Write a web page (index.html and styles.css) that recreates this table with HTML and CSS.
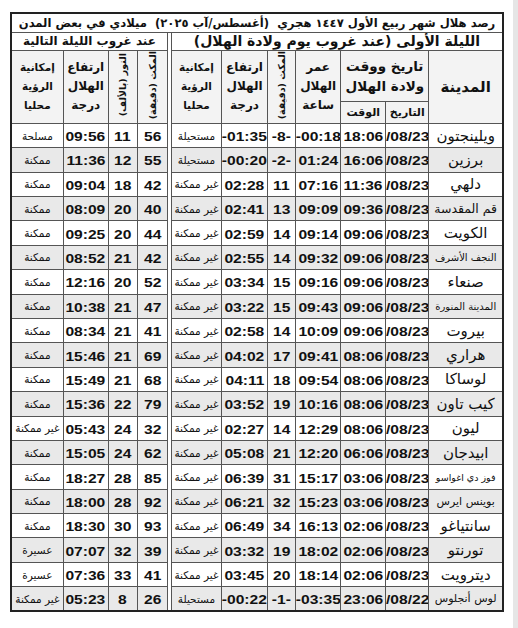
FILE: index.html
```html
<!DOCTYPE html>
<html lang="ar">
<head>
<meta charset="utf-8">
<title>رصد هلال شهر ربيع الأول</title>
<link rel="stylesheet" href="styles.css">
</head>
<body>
<table class="moon" dir="rtl">
  <colgroup>
    <col class="c-city"><col class="c-date"><col class="c-time"><col class="c-age"><col class="c-mk"><col class="c-alt"><col class="c-vis">
    <col class="c-gap">
    <col class="c-mk2"><col class="c-lt"><col class="c-alt2"><col class="c-vis2">
  </colgroup>
  <thead>
    <tr class="r-title">
      <th colspan="12" class="title">رصد هلال شهر ربيع الأول ١٤٤٧ هجري&nbsp; (أغسطس/آب ٢٠٢٥)&nbsp; ميلادي في بعض المدن</th>
    </tr>
    <tr class="r-sub">
      <th colspan="7" class="sub">الليلة الأولى (عند غروب يوم ولادة الهلال)</th>
      <th class="gap gap-top"></th>
      <th colspan="4" class="sub sub-left">عند غروب الليلة التالية</th>
    </tr>
    <tr class="r-ha">
      <th rowspan="2" class="h h-city">المدينة</th>
      <th colspan="2" class="h h-birth">تاريخ ووقت<br>ولادة الهلال</th>
      <th rowspan="2" class="h h-age">عمر<br>الهلال<br>ساعة</th>
      <th rowspan="2" class="h"><span class="vert">المكث (دقيقة)</span></th>
      <th rowspan="2" class="h h-alt">ارتفاع<br>الهلال<br>درجة</th>
      <th rowspan="2" class="h h-vis">إمكانية<br>الرؤية<br>محليا</th>
      <th rowspan="2" class="gap"></th>
      <th rowspan="2" class="h"><span class="vert">المكث (دقيقة)</span></th>
      <th rowspan="2" class="h"><span class="vert">النور (بالألف)</span></th>
      <th rowspan="2" class="h h-alt">ارتفاع<br>الهلال<br>درجة</th>
      <th rowspan="2" class="h h-vis">إمكانية<br>الرؤية<br>محليا</th>
    </tr>
    <tr class="r-hb">
      <th class="h h-small">التاريخ</th>
      <th class="h h-small">الوقت</th>
    </tr>
  </thead>
  <tbody>
    <tr><td class="city">ويلينجتون</td><td><span class="n">/08/23</span></td><td><span class="n">18:06</span></td><td><span class="n">-00:18</span></td><td><span class="n">-8-</span></td><td><span class="n">-01:35</span></td><td class="v">مستحيلة</td><td class="gap"></td><td><span class="n">56</span></td><td><span class="n">11</span></td><td><span class="n">09:56</span></td><td class="v">مسلحة</td></tr>
    <tr><td class="city">برزين</td><td><span class="n">/08/23</span></td><td><span class="n">16:06</span></td><td><span class="n">01:24</span></td><td><span class="n">-2-</span></td><td><span class="n">-00:20</span></td><td class="v">مستحيلة</td><td class="gap"></td><td><span class="n">55</span></td><td><span class="n">12</span></td><td><span class="n">11:36</span></td><td class="v">ممكنة</td></tr>
    <tr><td class="city">دلهي</td><td><span class="n">/08/23</span></td><td><span class="n">11:36</span></td><td><span class="n">07:16</span></td><td><span class="n">11</span></td><td><span class="n">02:28</span></td><td class="v">غير ممكنة</td><td class="gap"></td><td><span class="n">42</span></td><td><span class="n">18</span></td><td><span class="n">09:04</span></td><td class="v">ممكنة</td></tr>
    <tr><td class="city mid">قم المقدسة</td><td><span class="n">/08/23</span></td><td><span class="n">09:36</span></td><td><span class="n">09:09</span></td><td><span class="n">13</span></td><td><span class="n">02:41</span></td><td class="v">غير ممكنة</td><td class="gap"></td><td><span class="n">40</span></td><td><span class="n">20</span></td><td><span class="n">08:09</span></td><td class="v">ممكنة</td></tr>
    <tr><td class="city">الكويت</td><td><span class="n">/08/23</span></td><td><span class="n">09:06</span></td><td><span class="n">09:14</span></td><td><span class="n">14</span></td><td><span class="n">02:59</span></td><td class="v">غير ممكنة</td><td class="gap"></td><td><span class="n">44</span></td><td><span class="n">20</span></td><td><span class="n">09:25</span></td><td class="v">ممكنة</td></tr>
    <tr><td class="city xs">النجف الأشرف</td><td><span class="n">/08/23</span></td><td><span class="n">09:06</span></td><td><span class="n">09:32</span></td><td><span class="n">14</span></td><td><span class="n">02:55</span></td><td class="v">غير ممكنة</td><td class="gap"></td><td><span class="n">42</span></td><td><span class="n">21</span></td><td><span class="n">08:52</span></td><td class="v">ممكنة</td></tr>
    <tr><td class="city">صنعاء</td><td><span class="n">/08/23</span></td><td><span class="n">09:06</span></td><td><span class="n">09:16</span></td><td><span class="n">15</span></td><td><span class="n">03:34</span></td><td class="v">غير ممكنة</td><td class="gap"></td><td><span class="n">52</span></td><td><span class="n">20</span></td><td><span class="n">12:16</span></td><td class="v">ممكنة</td></tr>
    <tr><td class="city xs">المدينة المنورة</td><td><span class="n">/08/23</span></td><td><span class="n">09:06</span></td><td><span class="n">09:43</span></td><td><span class="n">15</span></td><td><span class="n">03:22</span></td><td class="v">غير ممكنة</td><td class="gap"></td><td><span class="n">47</span></td><td><span class="n">21</span></td><td><span class="n">10:38</span></td><td class="v">ممكنة</td></tr>
    <tr><td class="city">بيروت</td><td><span class="n">/08/23</span></td><td><span class="n">09:06</span></td><td><span class="n">10:09</span></td><td><span class="n">14</span></td><td><span class="n">02:58</span></td><td class="v">غير ممكنة</td><td class="gap"></td><td><span class="n">41</span></td><td><span class="n">21</span></td><td><span class="n">08:34</span></td><td class="v">ممكنة</td></tr>
    <tr><td class="city">هراري</td><td><span class="n">/08/23</span></td><td><span class="n">08:06</span></td><td><span class="n">09:41</span></td><td><span class="n">17</span></td><td><span class="n">04:02</span></td><td class="v">غير ممكنة</td><td class="gap"></td><td><span class="n">69</span></td><td><span class="n">21</span></td><td><span class="n">15:46</span></td><td class="v">ممكنة</td></tr>
    <tr><td class="city">لوساكا</td><td><span class="n">/08/23</span></td><td><span class="n">08:06</span></td><td><span class="n">09:54</span></td><td><span class="n">18</span></td><td><span class="n">04:11</span></td><td class="v">غير ممكنة</td><td class="gap"></td><td><span class="n">68</span></td><td><span class="n">21</span></td><td><span class="n">15:49</span></td><td class="v">ممكنة</td></tr>
    <tr><td class="city">كيب تاون</td><td><span class="n">/08/23</span></td><td><span class="n">08:06</span></td><td><span class="n">10:16</span></td><td><span class="n">19</span></td><td><span class="n">03:52</span></td><td class="v">غير ممكنة</td><td class="gap"></td><td><span class="n">79</span></td><td><span class="n">22</span></td><td><span class="n">15:36</span></td><td class="v">ممكنة</td></tr>
    <tr><td class="city">ليون</td><td><span class="n">/08/23</span></td><td><span class="n">08:06</span></td><td><span class="n">12:29</span></td><td><span class="n">14</span></td><td><span class="n">02:27</span></td><td class="v">غير ممكنة</td><td class="gap"></td><td><span class="n">32</span></td><td><span class="n">24</span></td><td><span class="n">05:43</span></td><td class="v">غير ممكنة</td></tr>
    <tr><td class="city">ابيدجان</td><td><span class="n">/08/23</span></td><td><span class="n">06:06</span></td><td><span class="n">12:20</span></td><td><span class="n">21</span></td><td><span class="n">05:08</span></td><td class="v">غير ممكنة</td><td class="gap"></td><td><span class="n">62</span></td><td><span class="n">24</span></td><td><span class="n">15:05</span></td><td class="v">ممكنة</td></tr>
    <tr><td class="city xxs">فوز دي اغواسو</td><td><span class="n">/08/23</span></td><td><span class="n">03:06</span></td><td><span class="n">15:17</span></td><td><span class="n">31</span></td><td><span class="n">06:39</span></td><td class="v">غير ممكنة</td><td class="gap"></td><td><span class="n">85</span></td><td><span class="n">28</span></td><td><span class="n">18:27</span></td><td class="v">ممكنة</td></tr>
    <tr><td class="city sm">بوينس ايرس</td><td><span class="n">/08/23</span></td><td><span class="n">03:06</span></td><td><span class="n">15:23</span></td><td><span class="n">32</span></td><td><span class="n">06:21</span></td><td class="v">غير ممكنة</td><td class="gap"></td><td><span class="n">92</span></td><td><span class="n">28</span></td><td><span class="n">18:00</span></td><td class="v">ممكنة</td></tr>
    <tr><td class="city">سانتياغو</td><td><span class="n">/08/23</span></td><td><span class="n">02:06</span></td><td><span class="n">16:13</span></td><td><span class="n">34</span></td><td><span class="n">06:49</span></td><td class="v">غير ممكنة</td><td class="gap"></td><td><span class="n">93</span></td><td><span class="n">30</span></td><td><span class="n">18:30</span></td><td class="v">ممكنة</td></tr>
    <tr><td class="city">تورنتو</td><td><span class="n">/08/23</span></td><td><span class="n">02:06</span></td><td><span class="n">18:02</span></td><td><span class="n">19</span></td><td><span class="n">03:32</span></td><td class="v">غير ممكنة</td><td class="gap"></td><td><span class="n">39</span></td><td><span class="n">32</span></td><td><span class="n">07:07</span></td><td class="v">عسيرة</td></tr>
    <tr><td class="city">ديترويت</td><td><span class="n">/08/23</span></td><td><span class="n">02:06</span></td><td><span class="n">18:14</span></td><td><span class="n">20</span></td><td><span class="n">03:45</span></td><td class="v">غير ممكنة</td><td class="gap"></td><td><span class="n">41</span></td><td><span class="n">33</span></td><td><span class="n">07:36</span></td><td class="v">عسيرة</td></tr>
    <tr class="last"><td class="city sm">لوس أنجلوس</td><td><span class="n">/08/22</span></td><td><span class="n">23:06</span></td><td><span class="n">-03:35</span></td><td><span class="n">-1-</span></td><td><span class="n">-00:22</span></td><td class="v">مستحيلة</td><td class="gap"></td><td><span class="n">26</span></td><td><span class="n">8</span></td><td><span class="n">05:23</span></td><td class="v">غير ممكنة</td></tr>
  </tbody>
</table>
</body>
</html>
```

FILE: styles.css
```css
html {
  background: linear-gradient(to right, #ffffff 513px, #e6e6e6 513px);
  min-height: 100%;
}

body {
  margin: 0;
  padding: 12px 0 0 10px;
  font-family: "DejaVu Sans", sans-serif;
  color: #111;
}

.moon {
  border-collapse: collapse;
  table-layout: fixed;
  width: 494px;
  direction: rtl;
  border: 2px solid #222;
}

.moon th,
.moon td {
  border: 1px solid #555;
  padding: 0;
  text-align: center;
  vertical-align: middle;
  overflow: hidden;
  white-space: nowrap;
}

.c-city { width: 74px; }
.c-date { width: 43px; }
.c-time { width: 45px; }
.c-age { width: 45px; }
.c-mk { width: 28px; }
.c-alt { width: 46px; }
.c-vis { width: 50px; }
.c-gap { width: 4px; }
.c-mk2 { width: 30px; }
.c-lt { width: 29px; }
.c-alt2 { width: 45px; }
.c-vis2 { width: 52px; }

.r-title { height: 19px; }
.r-sub { height: 18px; }
.r-ha { height: 48px; }
.r-hb { height: 20px; }
.moon tbody tr { height: 24.4px; }

.title {
  font-size: 11.6px;
  font-weight: bold;
  text-align: right;
  padding: 0 2px;
  word-spacing: 0;
  border-bottom: 1px solid #333;
}

.sub {
  font-size: 14px;
  font-weight: bold;
  line-height: 16px;
}

.sub-left {
  font-size: 12px;
}

.h {
  background: #f3f3f3;
  font-weight: bold;
}

.h-city { font-size: 15px; }
.h-birth { font-size: 13.5px; line-height: 20px; }
.h-age { font-size: 12px; line-height: 19px; }
.h-alt { font-size: 12px; line-height: 19px; }
.h-vis { font-size: 10.5px; line-height: 19px; }
.h-small { font-size: 11px; }

.vert {
  display: inline-block;
  writing-mode: vertical-rl;
  transform: rotate(180deg);
  font-size: 9.5px;
  line-height: 11px;
  font-weight: bold;
}

.gap {
  background: #fff;
  border-top-style: hidden !important;
  border-bottom-style: hidden !important;
}

.gap-top {
  border-top-style: solid !important;
}

.last .gap {
  border-bottom: 2px solid #222 !important;
}

.moon tbody tr:nth-child(even) td {
  background: #e9e9e9;
}

.moon tbody tr:nth-child(even) td.gap {
  background: #fff;
}

.n {
  display: inline-block;
  font-family: "Liberation Sans", Arial, sans-serif;
  font-weight: bold;
  font-size: 12px;
  transform: scaleX(1.3);
  direction: ltr;
  unicode-bidi: isolate;
}

.v {
  font-size: 10.5px;
}

.city {
  font-size: 15px;
}

.city.mid { font-size: 12.5px; }
.city.sm { font-size: 11px; }
.city.xs { font-size: 10px; }
.city.xxs { font-size: 9.5px; }
```
